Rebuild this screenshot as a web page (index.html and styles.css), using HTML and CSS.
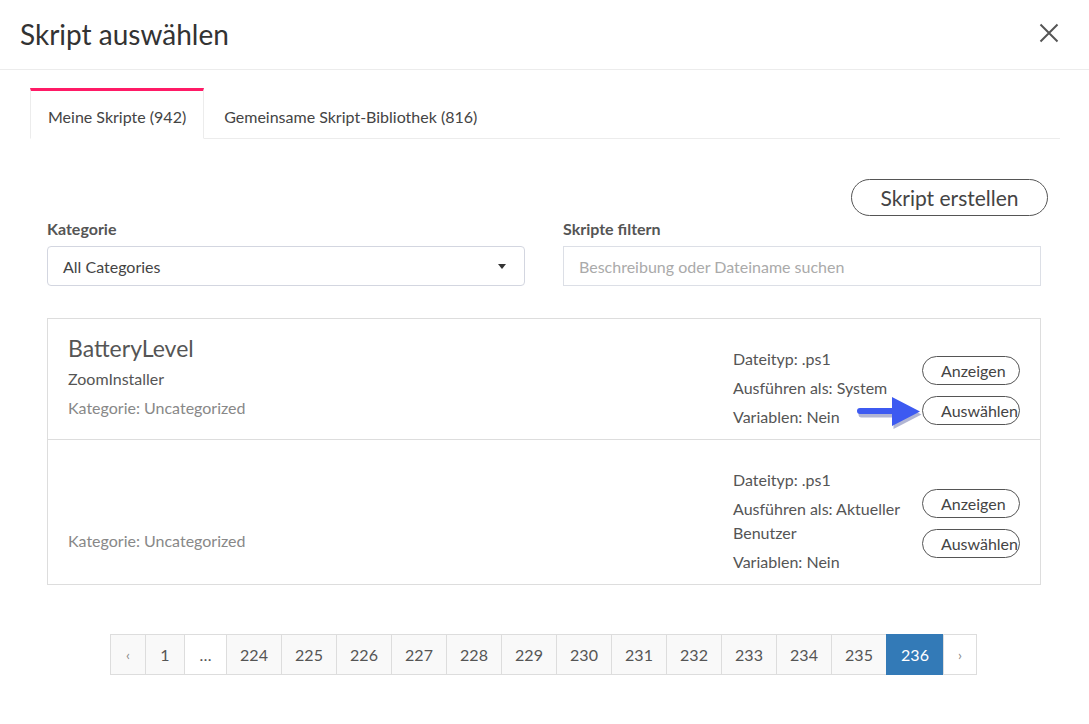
FILE: index.html
```html
<!DOCTYPE html>
<html lang="de">

<head>
  <meta charset="UTF-8">
  <meta name="viewport" content="width=device-width, initial-scale=1.0">
  <title>Skript auswählen</title>
  <link rel="stylesheet" href="styles.css">
</head>

<body>

  <div class="modal">
    <div class="modal-header">
      <h2 class="modal-title">Skript auswählen</h2>
      <button class="close-button" aria-label="Schließen">
        <svg width="20" height="20" viewBox="0 0 20 20" fill="none" xmlns="http://www.w3.org/2000/svg">
          <path stroke="#555" stroke-width="2" d="M1.5 1.5l17 17m0-17l-17 17" />
        </svg>
      </button>
    </div>

    <div class="modal-body">
      <ul class="tabs">
        <li class="tab active">Meine Skripte (942)</li>
        <li class="tab">Gemeinsame Skript-Bibliothek (816)</li>
      </ul>

      <div class="tab-content">
        <div class="actions">
          <button class="btn-outline btn-large">Skript erstellen</button>
        </div>

        <div class="filters">
          <div class="field">
            <label>Kategorie</label>
            <div class="select">
              <span>All Categories</span>
              <span class="caret"></span>
            </div>
          </div>
          <div class="field">
            <label>Skripte filtern</label>
            <input type="text" class="input" placeholder="Beschreibung oder Dateiname suchen">
          </div>
        </div>

        <div class="script-list">
          <div class="script-row">
            <div class="script-info">
              <div class="script-name">BatteryLevel</div>
              <div class="script-desc">ZoomInstaller</div>
              <div class="script-cat">Kategorie: Uncategorized</div>
            </div>
            <div class="script-side">
              <div class="script-meta">
                <p>Dateityp: .ps1</p>
                <p>Ausführen als: System</p>
                <p>Variablen: Nein</p>
              </div>
              <div class="script-buttons">
                <button class="btn-outline btn-small">Anzeigen</button>
                <button class="btn-outline btn-small">Auswählen</button>
                <!-- Markierung aus dem Screenshot -->
                <svg class="pointer-arrow" width="66" height="34" viewBox="0 0 66 34" xmlns="http://www.w3.org/2000/svg">
                  <path d="M4 13.5h32V2l28 14.5L36 31V19.5H4a3 3 0 0 1 0-6z" fill="#1f2a80" opacity="0.35" transform="translate(1.5 2)" />
                  <path d="M4 12h32V1l28 14.5L36 30V18H4a3 3 0 0 1 0-6z" fill="#3d5af1" />
                </svg>
              </div>
            </div>
          </div>

          <div class="script-row">
            <div class="script-info">
              <div class="script-name"></div>
              <div class="script-desc"></div>
              <div class="script-cat">Kategorie: Uncategorized</div>
            </div>
            <div class="script-side">
              <div class="script-meta">
                <p>Dateityp: .ps1</p>
                <p>Ausführen als: Aktueller Benutzer</p>
                <p>Variablen: Nein</p>
              </div>
              <div class="script-buttons">
                <button class="btn-outline btn-small">Anzeigen</button>
                <button class="btn-outline btn-small">Auswählen</button>
              </div>
            </div>
          </div>
        </div>

        <ul class="pagination">
          <li class="page nav">‹</li>
          <li class="page first">1</li>
          <li class="page gap">…</li>
          <li class="page">224</li>
          <li class="page">225</li>
          <li class="page">226</li>
          <li class="page">227</li>
          <li class="page">228</li>
          <li class="page">229</li>
          <li class="page">230</li>
          <li class="page">231</li>
          <li class="page">232</li>
          <li class="page">233</li>
          <li class="page">234</li>
          <li class="page">235</li>
          <li class="page active">236</li>
          <li class="page nav next">›</li>
        </ul>
      </div>
    </div>
  </div>

</body>

</html>
```

FILE: styles.css
```css
* {
  box-sizing: border-box;
  margin: 0;
  padding: 0;
}

body {
  font-family: 'Lato', 'Noto Sans', sans-serif;
  background-color: #fff;
  color: #555;
  font-size: 16px;
}

.modal {
  width: 1089px;
  min-height: 724px;
  background-color: #fff;
}

.modal-header {
  height: 70px;
  display: flex;
  align-items: center;
  justify-content: space-between;
  padding: 0 30px 0 20px;
  border-bottom: 1px solid #ececec;
}

.modal-title {
  font-size: 28px;
  font-weight: normal;
  color: #333;
  margin-top: -2px;
}

.close-button {
  background: transparent;
  border: none;
  cursor: pointer;
  display: flex;
  margin-top: -3px;
}

.modal-body {
  padding: 18px 29px 0 30px;
}

/* Onglets */
.tabs {
  display: flex;
  list-style: none;
  border-bottom: 1px solid #ececec;
}

.tab {
  height: 51px;
  display: flex;
  align-items: center;
  padding: 3px 19px 0 19px;
  color: #444;
  border: 1px solid transparent;
  border-top: 3px solid transparent;
  margin-bottom: -1px;
  cursor: pointer;
}

.tab.active {
  border-color: #ececec;
  border-top-color: #ff1a66;
  border-bottom-color: #fff;
  background-color: #fff;
  padding: 3px 17px 0 17px;
}

.tab-content {
  padding: 0 19px 0 17px;
}

.actions {
  display: flex;
  justify-content: flex-end;
  margin: 40px -7px 3px 0;
}

.btn-outline {
  font-family: inherit;
  background: #fff;
  border: 1px solid #555;
  border-radius: 999px;
  color: #444;
  cursor: pointer;
}

.btn-large {
  font-size: 21px;
  height: 37px;
  width: 197px;
}

.btn-small {
  font-size: 16px;
  height: 29px;
  width: 98px;
  text-align: left;
  padding-left: 18px;
  white-space: nowrap;
}

/* Filtres */
.filters {
  display: grid;
  grid-template-columns: 1fr 1fr;
  gap: 38px;
}

.field label {
  display: block;
  font-weight: bold;
  color: #555;
  line-height: 20px;
  margin-bottom: 7px;
}

.select {
  height: 40px;
  border: 1px solid #d3d6e0;
  border-radius: 4px;
  display: flex;
  align-items: center;
  justify-content: space-between;
  padding: 0 18px 0 15px;
  color: #444;
}

.caret {
  width: 0;
  height: 0;
  border-left: 4px solid transparent;
  border-right: 4px solid transparent;
  border-top: 5px solid #333;
}

.input {
  width: 100%;
  height: 40px;
  border: 1px solid #dcdfe6;
  padding: 0 15px;
  font-family: inherit;
  font-size: 16px;
  color: #444;
  outline: none;
}

.input::placeholder {
  color: #aaa;
}

/* Liste des scripts */
.script-list {
  margin-top: 32px;
  border: 1px solid #ddd;
}

.script-row {
  display: flex;
  justify-content: space-between;
  padding: 5px 20px 5px 20px;
}

.script-row+.script-row {
  border-top: 1px solid #ddd;
}

.script-info {
  align-self: center;
  padding-bottom: 6px;
}

.script-name {
  font-size: 23px;
  color: #555;
  line-height: 30px;
  height: 30px;
  margin-bottom: 4px;
}

.script-desc {
  color: #555;
  line-height: 24px;
  height: 24px;
  margin-bottom: 5px;
}

.script-cat {
  color: #888;
  line-height: 24px;
}

.script-side {
  display: flex;
  align-items: center;
  padding-top: 23px;
}

.script-meta {
  width: 176px;
  margin-right: 13px;
}

.script-meta p {
  line-height: 24px;
  margin-bottom: 5px;
}

.script-buttons {
  display: flex;
  flex-direction: column;
  gap: 11px;
  position: relative;
}

.pointer-arrow {
  position: absolute;
  left: -66px;
  top: 40px;
}

/* Pagination */
.pagination {
  display: flex;
  justify-content: center;
  list-style: none;
  margin-top: 49px;
}

.page {
  height: 41px;
  width: 56px;
  display: flex;
  align-items: center;
  justify-content: center;
  background-color: #f9f9f9;
  border: 1px solid #ddd;
  margin-left: -1px;
  color: #555;
  font-size: 16px;
}

.page.nav {
  width: 36px;
  font-size: 14px;
  color: #888;
}

.page.next {
  width: 34px;
  background-color: #fff;
}

.page.first {
  width: 40px;
}

.page.gap {
  width: 43px;
  background-color: #fff;
}

.page.active {
  background-color: #337ab7;
  border-color: #337ab7;
  color: #fff;
  width: 58px;
}
```
